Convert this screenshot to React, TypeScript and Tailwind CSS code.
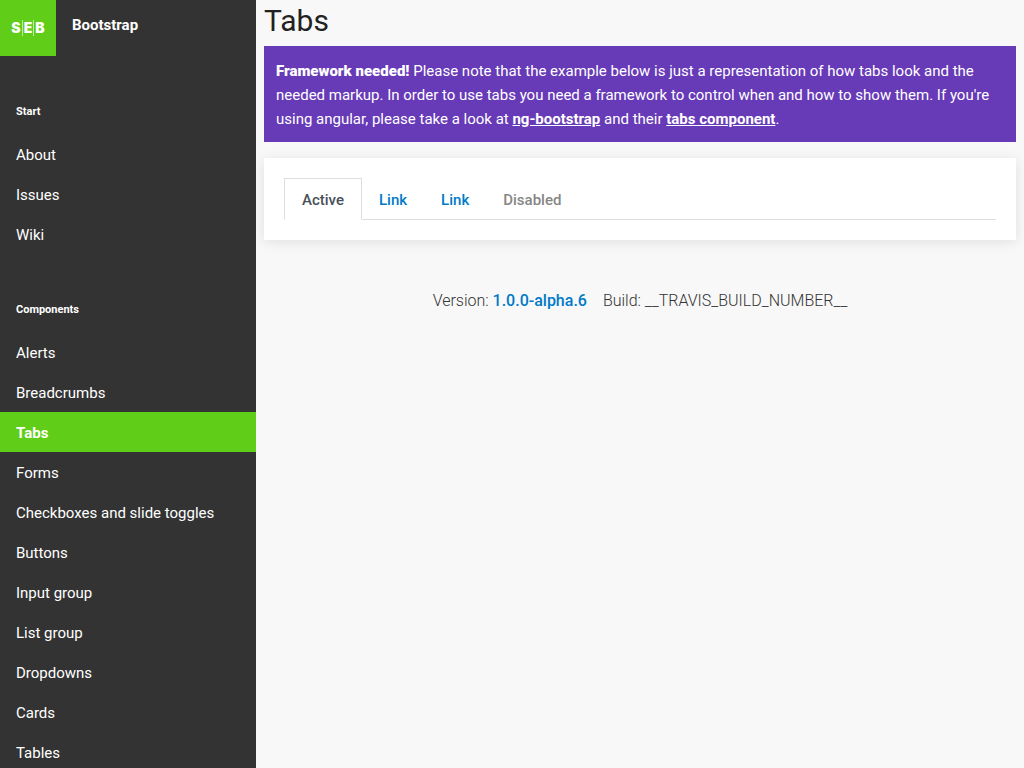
import React from "react";

const startLinks = ["About", "Issues", "Wiki"];
const componentLinks = [
  "Alerts",
  "Breadcrumbs",
  "Tabs",
  "Forms",
  "Checkboxes and slide toggles",
  "Buttons",
  "Input group",
  "List group",
  "Dropdowns",
  "Cards",
  "Tables",
];

function Logo() {
  return (
    <a href="#home" aria-label="SEB" className="block size-14 shrink-0 bg-[#60cd18]">
      <svg viewBox="0 0 56 56" className="size-14" aria-hidden="true">
        <g fill="#fff" fontFamily="Inter, sans-serif" fontWeight="900" fontSize="14" textAnchor="middle">
          <text x="16" y="33">S</text>
          <text x="28" y="33">E</text>
          <text x="40" y="33">B</text>
        </g>
        <path d="M22.5 20v16M33.5 20v16" stroke="#fff" strokeWidth="0.6" />
      </svg>
    </a>
  );
}

function NavSection({ title, links, active }: { title: string; links: string[]; active?: string }) {
  return (
    <section className="pb-[43px]">
      <h2 className="px-4 pb-[9px] text-[11px] leading-[26px] font-bold">{title}</h2>
      <ul>
        {links.map((label) => (
          <li key={label}>
            <a
              href={`#${label}`}
              className={
                label === active
                  ? "block bg-[#60cd18] px-4 pt-[9px] pb-[7px] font-bold"
                  : "block px-4 pt-[9px] pb-[7px] hover:bg-[#444]"
              }
            >
              {label}
            </a>
          </li>
        ))}
      </ul>
    </section>
  );
}

export default function App() {
  return (
    <div className="flex h-screen bg-[#f8f8f8] font-[Roboto,sans-serif] text-[15px] leading-6 text-[#333]">
      <aside className="w-64 shrink-0 overflow-hidden bg-[#333] text-white">
        <header className="flex">
          <Logo />
          <h1 className="px-4 pt-[13px] font-bold">Bootstrap</h1>
        </header>
        <nav className="pt-[43px]">
          <NavSection title="Start" links={startLinks} />
          <NavSection title="Components" links={componentLinks} active="Tabs" />
        </nav>
      </aside>

      <main className="min-w-0 flex-1 overflow-auto px-2">
        <h2 className="pt-[3px] pb-[7px] text-[30px] leading-9 text-[#222]">Tabs</h2>
        <div role="alert" className="mb-4 bg-[#673ab7] px-3 pt-[13px] pb-[11px] text-white">
          <strong className="font-black">Framework needed!</strong> Please note that the example below is
          just a representation of how tabs look and the needed markup. In order to use tabs you need a
          framework to control when and how to show them. If you're using angular, please take a look at{" "}
          <a href="#ng-bootstrap" className="font-bold underline">ng-bootstrap</a> and their{" "}
          <a href="#tabs-component" className="font-bold underline">tabs component</a>.
        </div>

        <div className="bg-white p-5 shadow-[0_2px_12px_rgba(0,0,0,0.1)]">
          <ul className="flex border-b border-[#ddd] font-medium">
            <li className="-mb-px">
              <a href="#active" className="block min-w-[78px] border border-b-white border-[#ddd] bg-white pt-[9px] pb-[7px] text-center text-[#495057]">
                Active
              </a>
            </li>
            <li>
              <a href="#link-1" className="block px-[17px] pt-[10px] pb-[7px] text-[#007ac7]">Link</a>
            </li>
            <li>
              <a href="#link-2" className="block px-[17px] pt-[10px] pb-[7px] text-[#007ac7]">Link</a>
            </li>
            <li>
              <a aria-disabled="true" className="block px-[17px] pt-[10px] pb-[7px] text-[#868686]">Disabled</a>
            </li>
          </ul>
        </div>

        <footer className="flex justify-center gap-4 pt-[49px] text-base font-light">
          <span>
            Version: <a href="#version" className="font-medium text-[#007ac7]">1.0.0-alpha.6</a>
          </span>
          <span>Build: __TRAVIS_BUILD_NUMBER__</span>
        </footer>
      </main>
    </div>
  );
}
